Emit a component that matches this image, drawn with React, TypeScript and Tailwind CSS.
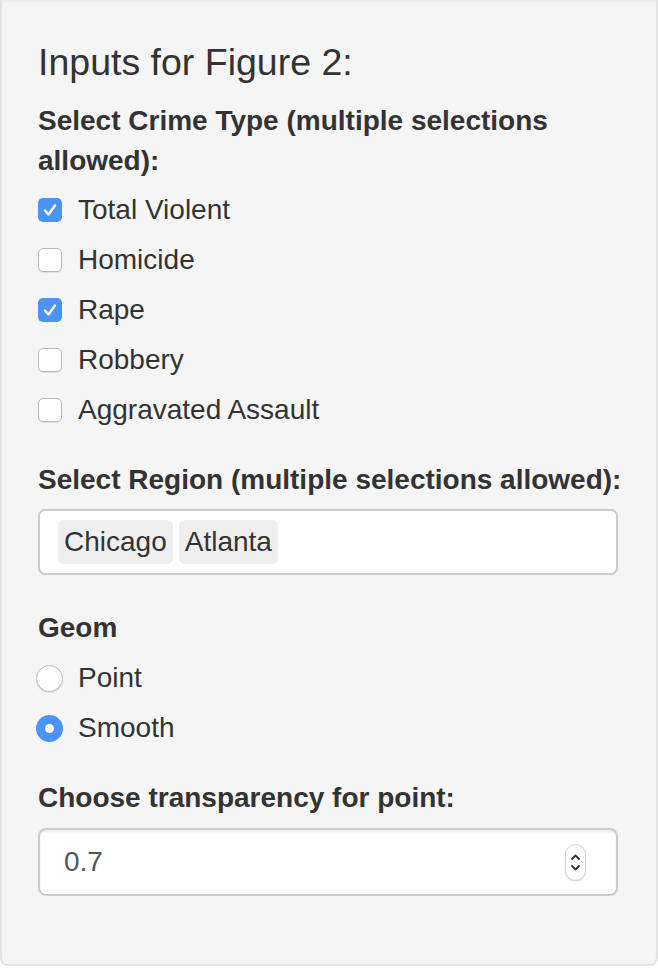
import React from "react";

const crimeTypes = [
  { name: "Total Violent", checked: true },
  { name: "Homicide", checked: false },
  { name: "Rape", checked: true },
  { name: "Robbery", checked: false },
  { name: "Aggravated Assault", checked: false },
];

const regions = ["Chicago", "Atlanta"];

function Checkbox({ checked }: { checked: boolean }) {
  if (checked) {
    return (
      <span className="flex h-[24px] w-[24px] shrink-0 items-center justify-center rounded-[5px] bg-[#4b93f5]">
        <svg width="24" height="24" viewBox="0 0 24 24" fill="none">
          <path d="M7 12.5l3.5 4L17 7.5" stroke="white" strokeWidth="2.4" strokeLinecap="round" strokeLinejoin="round" />
        </svg>
      </span>
    );
  }
  return <span className="h-[24px] w-[24px] shrink-0 rounded-[5px] border border-[#b9b9b9] bg-white shadow-[0_1px_1px_rgba(0,0,0,0.08)]" />;
}

function Radio({ checked }: { checked: boolean }) {
  if (checked) {
    return (
      <span className="-ml-[2px] flex h-[27px] w-[27px] shrink-0 items-center justify-center rounded-full bg-[#4b93f5]">
        <span className="h-[9px] w-[9px] rounded-full bg-white" />
      </span>
    );
  }
  return <span className="-ml-[2px] h-[27px] w-[27px] shrink-0 rounded-full border border-[#b9b9b9] bg-white shadow-[0_1px_1px_rgba(0,0,0,0.1)]" />;
}

export default function App() {
  return (
    <div className="min-h-screen bg-white font-[family-name:Liberation_Sans,Arial,sans-serif] text-[#333]">
      <div className="rounded-b-[8px] border-2 border-t-0 border-[#e3e3e3] bg-[#f5f5f5] pb-[38px] pl-[36px] pr-[38px] shadow-[inset_0_2px_2px_rgba(0,0,0,0.04)]">
        <div className="h-[2px] bg-[#ebebeb]" />
        <h4 className="mb-[18px] mt-[40px] text-[37.5px] font-normal leading-[1.1]">Inputs for Figure 2:</h4>

        <div className="mb-[30px]">
          <label className="mb-[9px] block text-[28px] font-bold leading-[40px]">
            Select Crime Type (multiple selections allowed):
          </label>
          <div className="flex flex-col gap-[10px]">
            {crimeTypes.map((c) => (
              <div key={c.name} className="flex h-[40px] items-center gap-[16px] text-[28px]">
                <Checkbox checked={c.checked} />
                <span>{c.name}</span>
              </div>
            ))}
          </div>
        </div>

        <div className="mb-[33px]">
          <label className="mb-[9px] block whitespace-nowrap text-[28px] font-bold leading-[40px]">
            Select Region (multiple selections allowed):
          </label>
          <div className="flex h-[66px] items-center gap-[6px] rounded-[7px] border-2 border-[#cccccc] bg-white px-[18px]">
            {regions.map((r) => (
              <span key={r} className="flex h-[44px] items-center rounded-[6px] bg-[#efefef] px-[6px] text-[28px]">
                {r}
              </span>
            ))}
          </div>
        </div>

        <div className="mb-[30px]">
          <label className="mb-[10px] block text-[28px] font-bold leading-[40px]">Geom</label>
          <div className="flex flex-col gap-[10px]">
            <div className="flex h-[40px] items-center gap-[15px] text-[28px]">
              <Radio checked={false} />
              <span>Point</span>
            </div>
            <div className="flex h-[40px] items-center gap-[15px] text-[28px]">
              <Radio checked={true} />
              <span>Smooth</span>
            </div>
          </div>
        </div>

        <div className="mb-[30px]">
          <label className="mb-[10px] block text-[28px] font-bold leading-[40px]">
            Choose transparency for point:
          </label>
          <div className="flex h-[68px] items-center justify-between rounded-[8px] border-2 border-[#cccccc] bg-white pl-[24px] pr-[30px] shadow-[inset_0_2px_2px_rgba(0,0,0,0.075)]">
            <span className="text-[28px] text-[#555]">0.7</span>
            <span className="flex h-[37px] w-[21px] flex-col items-center justify-center gap-[3px] rounded-full border border-[#cfcfcf] bg-white shadow-[0_1px_1px_rgba(0,0,0,0.1)]">
              <svg width="11" height="8" viewBox="0 0 11 8" fill="none">
                <path d="M2 6l3.5-3.5L9 6" stroke="#333" strokeWidth="1.8" strokeLinecap="round" strokeLinejoin="round" />
              </svg>
              <svg width="11" height="8" viewBox="0 0 11 8" fill="none">
                <path d="M2 2l3.5 3.5L9 2" stroke="#333" strokeWidth="1.8" strokeLinecap="round" strokeLinejoin="round" />
              </svg>
            </span>
          </div>
        </div>
      </div>
    </div>
  );
}
